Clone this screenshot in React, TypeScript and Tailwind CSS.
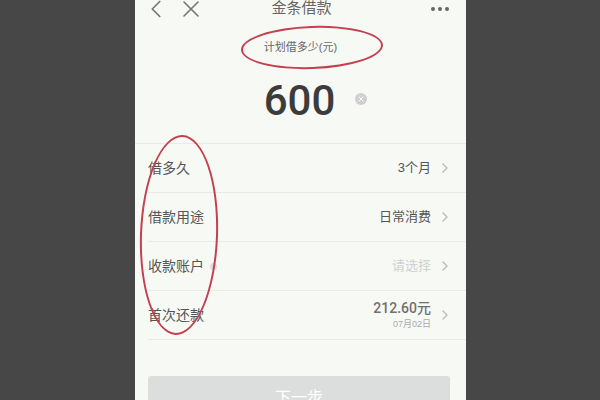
import { ChevronLeft, X, ChevronRight } from "lucide-react";

const FONT = "font-['Liberation_Sans','Noto_Sans_CJK_SC',sans-serif]";

type Row = {
  label: string;
  value?: string;
  sub?: string;
  muted?: boolean;
  dot?: boolean;
};

const rows: Row[] = [
  { label: "借多久", value: "3个月" },
  { label: "借款用途", value: "日常消费" },
  { label: "收款账户", value: "请选择", muted: true, dot: true },
  { label: "首次还款", value: "212.60元", sub: "07月02日" },
];

function FormRow({ row }: { row: Row }) {
  return (
    <div className="flex h-[49px] items-center border-b border-[#e9ebe8] pr-[13px]">
      <div className="flex items-center gap-[6px] text-[14px] text-[#555]">
        {row.label}
        {row.dot && <span className="h-[7px] w-[7px] rounded-full bg-[#dcdcdc]" />}
      </div>
      <div className="ml-auto flex items-center gap-[6px]">
        {row.sub ? (
          <div className="flex flex-col items-end leading-none">
            <span className="font-['Roboto','Noto_Sans_CJK_SC',sans-serif] text-[14px] font-medium text-[#707070]">{row.value}</span>
            <span className="mt-[5px] text-[9px] text-[#aaa]">{row.sub}</span>
          </div>
        ) : (
          <span className={`text-[13px] ${row.muted ? "text-[#cfd1cf]" : "text-[#555]"}`}>{row.value}</span>
        )}
        <ChevronRight className="h-[16px] w-[16px] text-[#bbbbbb]" strokeWidth={2} />
      </div>
    </div>
  );
}

export default function App() {
  return (
    <div className={`flex h-[400px] w-[600px] overflow-hidden bg-[#474747] pl-[135px] ${FONT}`}>
      <div className="relative flex w-[331px] flex-col bg-[#f7f9f5]">
        {/* top bar */}
        <div className="flex h-[17px] items-center px-[16px] text-[#777]">
          <ChevronLeft className="-ml-[10px] h-[30px] w-[30px] shrink-0" strokeWidth={1.4} />
          <X className="ml-[6px] h-[28px] w-[28px] shrink-0" strokeWidth={1.4} />
          <div className="-ml-[33px] flex-1 text-center text-[15px] text-[#666]">金条借款</div>
          <div className="flex gap-[3px] pr-[1px]">
            <span className="h-[4px] w-[4px] rounded-full bg-[#666]" />
            <span className="h-[4px] w-[4px] rounded-full bg-[#666]" />
            <span className="h-[4px] w-[4px] rounded-full bg-[#666]" />
          </div>
        </div>

        {/* amount */}
        <div className="mt-[23px] text-center text-[11px] leading-[14px] text-[#666]">计划借多少(元)</div>
        <div className="mt-[26px] flex items-center justify-center pl-[30px]">
          <span className="font-['Roboto',sans-serif] text-[42px] font-medium leading-none text-[#3c3c3c]">600</span>
          <span className="ml-[20px] -mt-[4px] flex h-[12px] w-[12px] items-center justify-center rounded-full bg-[#cfcfcf]">
            <X className="h-[8px] w-[8px] text-white" strokeWidth={3} />
          </span>
        </div>

        {/* form rows */}
        <div className="mt-[21px] border-t border-[#e9ebe8] pl-[13px]">
          {rows.map((r) => (
            <FormRow key={r.label} row={r} />
          ))}
        </div>

        {/* next button */}
        <div className="mt-[36px] px-[13px] pr-[16px]">
          <div className="flex h-[44px] items-center justify-center rounded-[3px] bg-[#dcdedd] text-[16px] text-white">
            下一步
          </div>
        </div>

        {/* hand-drawn annotations */}
        <div className="pointer-events-none absolute left-[106px] top-[26px] h-[43px] w-[142px] -rotate-[2deg] rounded-[50%] border-2 border-[#c5404f]" />
        <div className="pointer-events-none absolute left-[5px] top-[135px] h-[200px] w-[78px] rotate-[2deg] rounded-[50%] border-2 border-[#c5404f]" />
      </div>
    </div>
  );
}
